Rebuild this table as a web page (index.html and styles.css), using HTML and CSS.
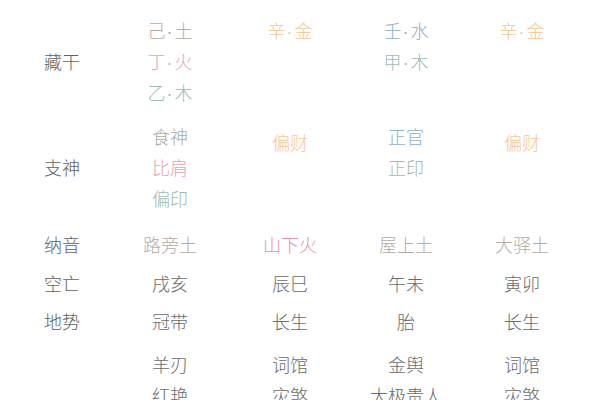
FILE: index.html
```html
<!DOCTYPE html>
<html lang="zh-CN">
<head>
<meta charset="utf-8">
<link rel="stylesheet" href="styles.css">
</head>
<body>
<div class="table">
  <div class="row r1">
    <div class="label">藏干</div>
    <div class="cell"><span class="earth">己<i class="dot">·</i>土</span><span class="fire">丁<i class="dot">·</i>火</span><span class="wood">乙<i class="dot">·</i>木</span></div>
    <div class="cell"><span class="metal">辛<i class="dot">·</i>金</span></div>
    <div class="cell"><span class="water">壬<i class="dot">·</i>水</span><span class="wood">甲<i class="dot">·</i>木</span></div>
    <div class="cell"><span class="metal">辛<i class="dot">·</i>金</span></div>
  </div>
  <div class="row r2">
    <div class="label">支神</div>
    <div class="cell"><span class="grey">食神</span><span class="fire">比肩</span><span class="wood">偏印</span></div>
    <div class="cell"><span class="metal low">偏财</span></div>
    <div class="cell"><span class="water">正官</span><span class="wood">正印</span></div>
    <div class="cell"><span class="metal low">偏财</span></div>
  </div>
  <div class="row r3">
    <div class="label">纳音</div>
    <div class="cell"><span class="earth">路旁土</span></div>
    <div class="cell"><span class="fire2">山下火</span></div>
    <div class="cell"><span class="earth">屋上土</span></div>
    <div class="cell"><span class="earth">大驿土</span></div>
  </div>
  <div class="row r4">
    <div class="label">空亡</div>
    <div class="cell"><span class="plain">戌亥</span></div>
    <div class="cell"><span class="plain">辰巳</span></div>
    <div class="cell"><span class="plain">午未</span></div>
    <div class="cell"><span class="plain">寅卯</span></div>
  </div>
  <div class="row r5">
    <div class="label">地势</div>
    <div class="cell"><span class="plain">冠带</span></div>
    <div class="cell"><span class="plain">长生</span></div>
    <div class="cell"><span class="plain">胎</span></div>
    <div class="cell"><span class="plain">长生</span></div>
  </div>
  <div class="row r6">
    <div class="label"></div>
    <div class="cell"><span class="plain">羊刃</span><span class="plain">红艳</span></div>
    <div class="cell"><span class="plain">词馆</span><span class="plain">灾煞</span></div>
    <div class="cell"><span class="plain">金舆</span><span class="plain">大极贵人</span></div>
    <div class="cell"><span class="plain">词馆</span><span class="plain">灾煞</span></div>
  </div>
</div>
</body>
</html>
```

FILE: styles.css
```css
html, body {
  margin: 0;
  padding: 0;
  background: #ffffff;
}
body {
  width: 600px;
  height: 400px;
  overflow: hidden;
  font-family: "Noto Sans CJK SC", "Noto Sans", sans-serif;
  font-size: 18px;
  font-weight: 300;
}
.table {
  padding-top: 15px;
  padding-left: 44px;
}
.row {
  display: grid;
  grid-template-columns: 66px 120px 120px 112px 120px;
  align-items: start;
}
.label {
  align-self: center;
  color: #626262;
  line-height: 31px;
  white-space: nowrap;
}
.cell {
  display: flex;
  flex-direction: column;
  align-items: center;
  line-height: 31px;
}
.cell span {
  display: block;
  height: 31px;
  white-space: nowrap;
}
.dot {
  font-style: normal;
  font-family: "Liberation Sans", sans-serif;
  line-height: 0;
  padding: 0 2px 0 1px;
}
.r1 { margin-bottom: 13px; }
.r2 { margin-bottom: 15px; }
.r3 { margin-bottom: 8px; }
.r4 { margin-bottom: 7px; }
.r5 { margin-bottom: 12px; }
.cell .low { margin-top: 6px; }
.earth { color: #b5aaa2; }
.fire { color: #e3a3b5; }
.fire2 { color: #e88fa8; }
.wood { color: #9fbab0; }
.metal { color: #f4c596; }
.water { color: #8cb0c8; }
.grey { color: #aaaaaa; }
.plain { color: #6a6a6a; }
```
